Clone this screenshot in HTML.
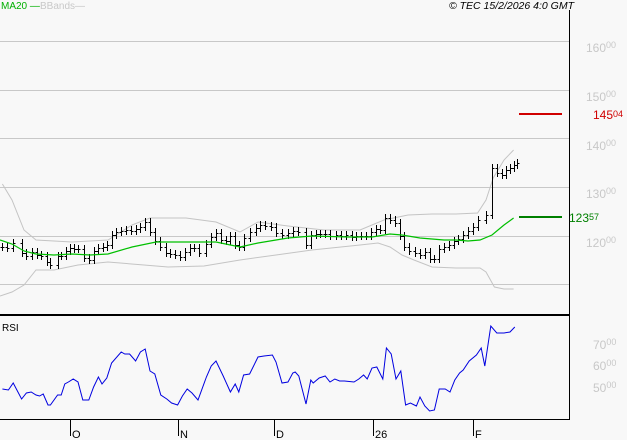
<!DOCTYPE html>
<html><head><meta charset="utf-8"><style>
html,body{margin:0;padding:0;background:#f8f8f8;}
svg{display:block;font-family:"Liberation Sans",sans-serif;}
</style></head><body>
<svg id="s" width="627" height="440" viewBox="0 0 627 440" xmlns="http://www.w3.org/2000/svg">
<rect width="627" height="440" fill="#f8f8f8"/>
<g stroke="#c8c8c8" stroke-width="1">
<line x1="0" y1="41.5" x2="569" y2="41.5"/>
<line x1="0" y1="90.5" x2="569" y2="90.5"/>
<line x1="0" y1="138.5" x2="569" y2="138.5"/>
<line x1="0" y1="187.5" x2="569" y2="187.5"/>
<line x1="0" y1="236.5" x2="569" y2="236.5"/>
<line x1="0" y1="284.5" x2="569" y2="284.5"/>
</g>
<line x1="569.5" y1="10" x2="569.5" y2="420" stroke="#000"/>
<line x1="0" y1="315" x2="570" y2="315" stroke="#000" stroke-width="2"/>
<line x1="0" y1="419.5" x2="570" y2="419.5" stroke="#000"/>
<g stroke="#000"><line x1="70.5" y1="420" x2="70.5" y2="436"/><line x1="178.5" y1="420" x2="178.5" y2="436"/><line x1="274.5" y1="420" x2="274.5" y2="436"/><line x1="373.5" y1="420" x2="373.5" y2="436"/><line x1="473.5" y1="420" x2="473.5" y2="436"/></g>
<g font-size="11" fill="#000"><text x="72" y="438">O</text><text x="180" y="438">N</text><text x="276" y="438">D</text><text x="375" y="438">26</text><text x="475" y="438">F</text></g>
<g id="bands" fill="none" stroke="#c4c4c4" stroke-width="1"></g>
<g id="bars" stroke="#000" stroke-width="1"></g>
<polyline id="ma" fill="none" stroke="#00c000" stroke-width="1.2"/>
<polyline id="rsi" fill="none" stroke="#0000e0" stroke-width="1"/>
<line x1="519" y1="114" x2="562" y2="114" stroke="#d00000" stroke-width="2"/>
<line x1="519" y1="217" x2="562" y2="217" stroke="#008000" stroke-width="2"/>
<g font-size="12" fill="#c8c8c8">
<text x="586" y="52">160<tspan font-size="9" dy="-4">00</tspan></text>
<text x="586" y="101">150<tspan font-size="9" dy="-4">00</tspan></text>
<text x="586" y="150">140<tspan font-size="9" dy="-4">00</tspan></text>
<text x="586" y="198">130<tspan font-size="9" dy="-4">00</tspan></text>
<text x="586" y="247">120<tspan font-size="9" dy="-4">00</tspan></text>
<text x="593" y="349">70<tspan font-size="9" dy="-4">00</tspan></text>
<text x="593" y="370">60<tspan font-size="9" dy="-4">00</tspan></text>
<text x="593" y="392">50<tspan font-size="9" dy="-4">00</tspan></text>
</g>
<text x="593" y="119" font-size="12" fill="#d00000">145<tspan font-size="9" dy="-2">04</tspan></text>
<text x="569" y="222" font-size="12" fill="#008000">123<tspan font-size="9" dy="-2">57</tspan></text>
<text x="1" y="9" font-size="10" fill="#00b000">MA20 —</text>
<text x="40" y="9" font-size="10" fill="#c8c8c8">BBands—</text>
<text x="574" y="9" font-size="10.5" font-style="italic" fill="#000" text-anchor="end">© TEC 15/2/2026 4:0 GMT</text>
<text x="2" y="331" font-size="10" fill="#000">RSI</text>
</svg>
<script>
var K=1.2;
function pl(a){return a.map(p=>[p[0]*K,p[1]].join(',')).join(' ');}
var up=[[2,184],[10,200],[20,230],[30,240],[60,242],[90,240],[110,225],[125,218],[155,218],[180,222],[200,232],[215,222],[240,226],[270,230],[300,230],[320,220],[340,215],[360,214],[380,214],[398,213],[405,200],[411,178],[420,160],[428,150]];
var lo=[[0,296],[10,292],[20,285],[30,270],[45,270],[65,265],[90,262],[120,265],[140,267],[170,266],[200,260],[230,255],[260,250],[300,245],[315,243],[325,247],[335,255],[345,260],[360,267],[380,268],[400,268],[405,272],[412,287],[420,289],[428,289]];
var ma=[[0,240],[10,244],[20,251],[30,254],[45,255],[60,254],[75,255],[90,254],[110,247],[130,242],[150,242],[180,242],[200,247],[215,243],[240,238],[260,236],[290,237],[310,237],[325,234],[335,235],[350,238],[370,240],[380,240],[390,241],[400,240],[410,235],[420,225],[428,218]];
var rsi=[[2,389],[7,390],[11,383],[18,399],[22,393],[26,392],[30,395],[33,396],[36,394],[40,405],[42,405],[48,395],[51,395],[54,384],[57,382],[61,379],[65,382],[69,400],[74,400],[78,387],[82,377],[85,384],[89,378],[93,363],[101,352],[104,354],[108,354],[113,361],[117,352],[121,349],[125,371],[129,374],[134,395],[139,399],[143,403],[148,405],[152,396],[156,389],[160,393],[165,400],[172,377],[176,366],[180,361],[186,376],[192,392],[196,384],[199,392],[203,375],[208,374],[215,357],[220,356],[227,355],[230,362],[235,383],[240,382],[244,373],[246,372],[249,376],[255,404],[259,380],[261,383],[266,378],[271,376],[275,382],[279,379],[283,381],[287,381],[295,382],[299,379],[303,375],[306,379],[310,368],[314,367],[319,379],[322,348],[326,354],[330,379],[334,371],[338,405],[342,403],[347,406],[350,397],[354,406],[358,411],[362,410],[366,389],[371,389],[375,392],[379,380],[383,373],[386,370],[391,361],[397,355],[401,348],[404,366],[409,326],[414,333],[420,333],[425,332],[429,327]];
var c=[[2,247],[6,248],[11,243],[18,253],[22,256],[27,252],[31,255],[34,256],[39,262],[42,265],[48,256],[51,256],[55,251],[58,248],[62,249],[65,249],[70,258],[74,260],[78,251],[82,248],[86,247],[89,245],[93,235],[97,232],[101,231],[105,230],[109,231],[113,229],[117,227],[121,222],[125,232],[129,241],[133,247],[138,253],[142,254],[146,255],[150,257],[154,252],[158,248],[162,248],[166,253],[172,244],[176,237],[180,233],[184,240],[188,241],[192,236],[196,245],[199,247],[203,238],[208,232],[213,228],[217,225],[221,226],[226,227],[230,233],[235,235],[240,233],[244,231],[248,232],[255,245],[259,235],[263,234],[267,234],[271,234],[275,236],[280,235],[284,236],[288,235],[293,237],[297,236],[301,236],[305,236],[309,232],[313,229],[317,230],[321,218],[325,220],[329,223],[333,236],[337,247],[341,251],[346,253],[350,255],[354,252],[358,259],[362,259],[366,249],[370,247],[374,245],[378,241],[382,239],[386,235],[390,231],[394,227],[398,220],[405,215],[410,168],[414,173],[418,175],[422,170],[425,168],[428,165],[431,163]];
var ns='http://www.w3.org/2000/svg';
var b=document.getElementById('bands');
[up,lo].forEach(function(a){var p=document.createElementNS(ns,'polyline');p.setAttribute('points',pl(a));b.appendChild(p);});
document.getElementById('ma').setAttribute('points',pl(ma));
document.getElementById('rsi').setAttribute('points',pl(rsi));
var d='';
for(var i=0;i<c.length;i++){var x=Math.round(c[i][0]*K)+.5,y=c[i][1];var pr=i>0?c[i-1][1]:y;var h=Math.min(y,pr)-4,l=Math.max(y,pr)+4;
d+='M'+x+' '+h+'V'+l+'M'+(x-2)+' '+(pr+.5)+'H'+x+'M'+x+' '+(y+.5)+'H'+(x+2);}
var p=document.createElementNS(ns,'path');p.setAttribute('d',d);p.setAttribute('fill','none');document.getElementById('bars').appendChild(p);
</script>
</body></html>
